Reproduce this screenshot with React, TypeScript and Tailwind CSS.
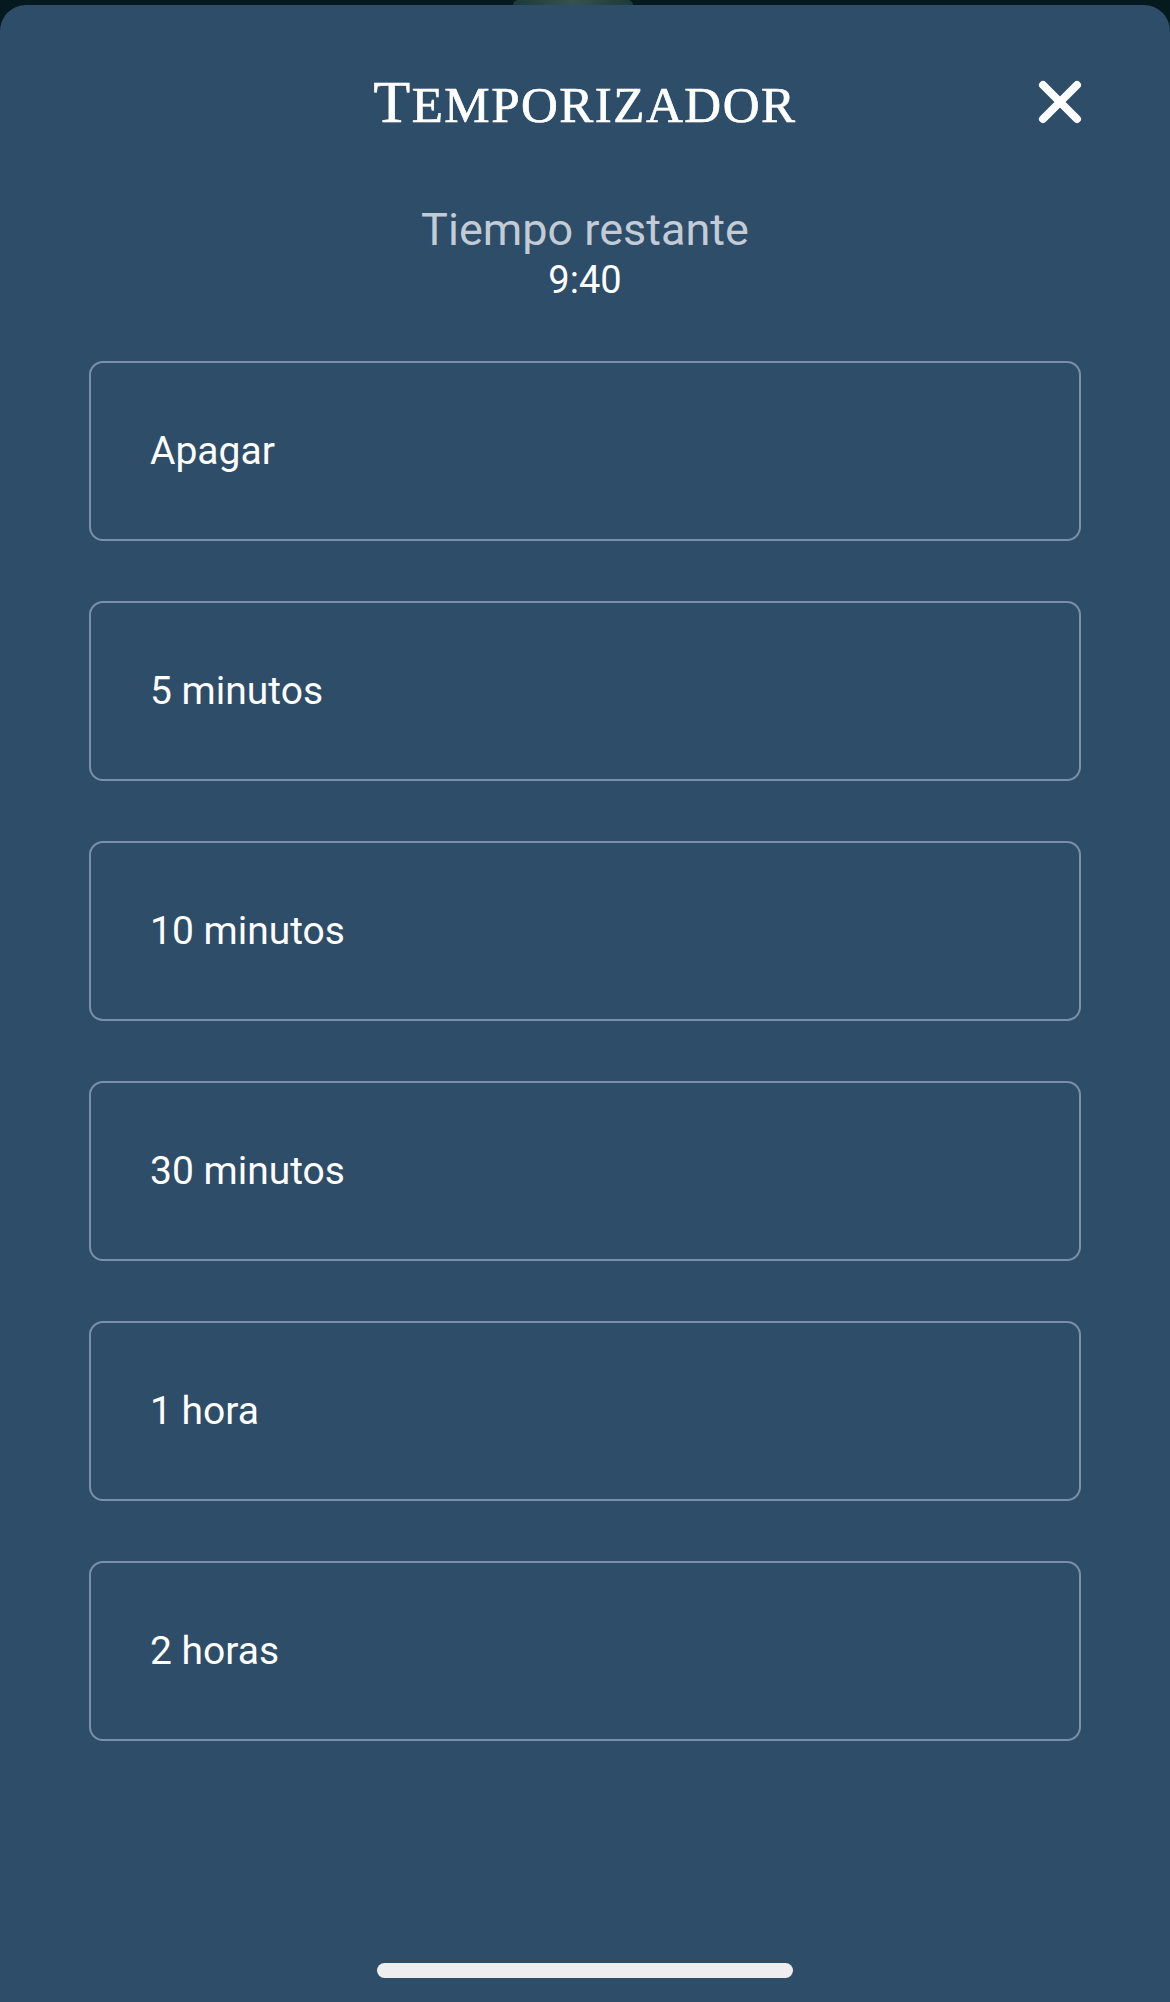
import { useState } from 'react'

const options = ['Apagar', '5 minutos', '10 minutos', '30 minutos', '1 hora', '2 horas']

export default function App() {
  const [selected, setSelected] = useState<string | null>(null)

  return (
    <div className="w-[1170px] h-[2002px] flex flex-col bg-[#041a1e] overflow-hidden">
      {/* what peeks out behind the sheet */}
      <div className="h-[5px] flex">
        <div className="ml-[513px] w-[120px] h-[5px] bg-gradient-to-r from-[#1c3a3a] via-[#35524f] to-[#1c3a3a] rounded-t-full" />
      </div>

      {/* Sheet */}
      <div className="flex-1 flex flex-col bg-[#2e4d69] rounded-t-[26px]">
        {/* Header */}
        <div className="relative mt-[67px] h-[60px] flex justify-center">
          <h1
            className="text-white leading-[60px] tracking-[1.5px] uppercase [-webkit-text-stroke:0.7px_white]"
            style={{ fontFamily: '"Liberation Serif", "DejaVu Serif", serif' }}
          >
            <span className="text-[60px]">T</span>
            <span className="text-[51px]">emporizador</span>
          </h1>
          <button
            onClick={() => setSelected(null)}
            className="absolute right-[87px] top-[7px] w-[46px] h-[46px] flex items-center justify-center"
          >
            <svg width="46" height="46" viewBox="0 0 46 46" fill="none">
              <path d="M6 6 L40 40 M40 6 L6 40" stroke="white" strokeWidth="8" strokeLinecap="round" />
            </svg>
          </button>
        </div>

        {/* Remaining time */}
        <div
          className="mt-[72px] flex flex-col items-center"
          style={{ fontFamily: 'Roboto, "Noto Sans", sans-serif' }}
        >
          <p className="text-[45px] leading-[52px] text-[#c3ccd6]">Tiempo restante</p>
          <p className="mt-[3px] text-[38px] leading-[42px] text-white">9:40</p>
        </div>

        {/* Options */}
        <div
          className="mt-[60px] px-[89px] flex flex-col gap-[60px]"
          style={{ fontFamily: 'Roboto, "Noto Sans", sans-serif' }}
        >
          {options.map((opt) => (
            <button
              key={opt}
              onClick={() => setSelected(opt)}
              className={`h-[180px] w-full flex items-center pl-[59px] border-2 rounded-[14px] text-left text-[39px] text-white ${
                selected === opt ? 'border-white bg-white/5' : 'border-[#7a90a6]'
              }`}
            >
              {opt}
            </button>
          ))}
        </div>

        {/* Home indicator */}
        <div className="mt-auto mb-[24px] flex justify-center">
          <div className="w-[416px] h-[15px] rounded-full bg-[#eeeeee]" />
        </div>
      </div>
    </div>
  )
}
